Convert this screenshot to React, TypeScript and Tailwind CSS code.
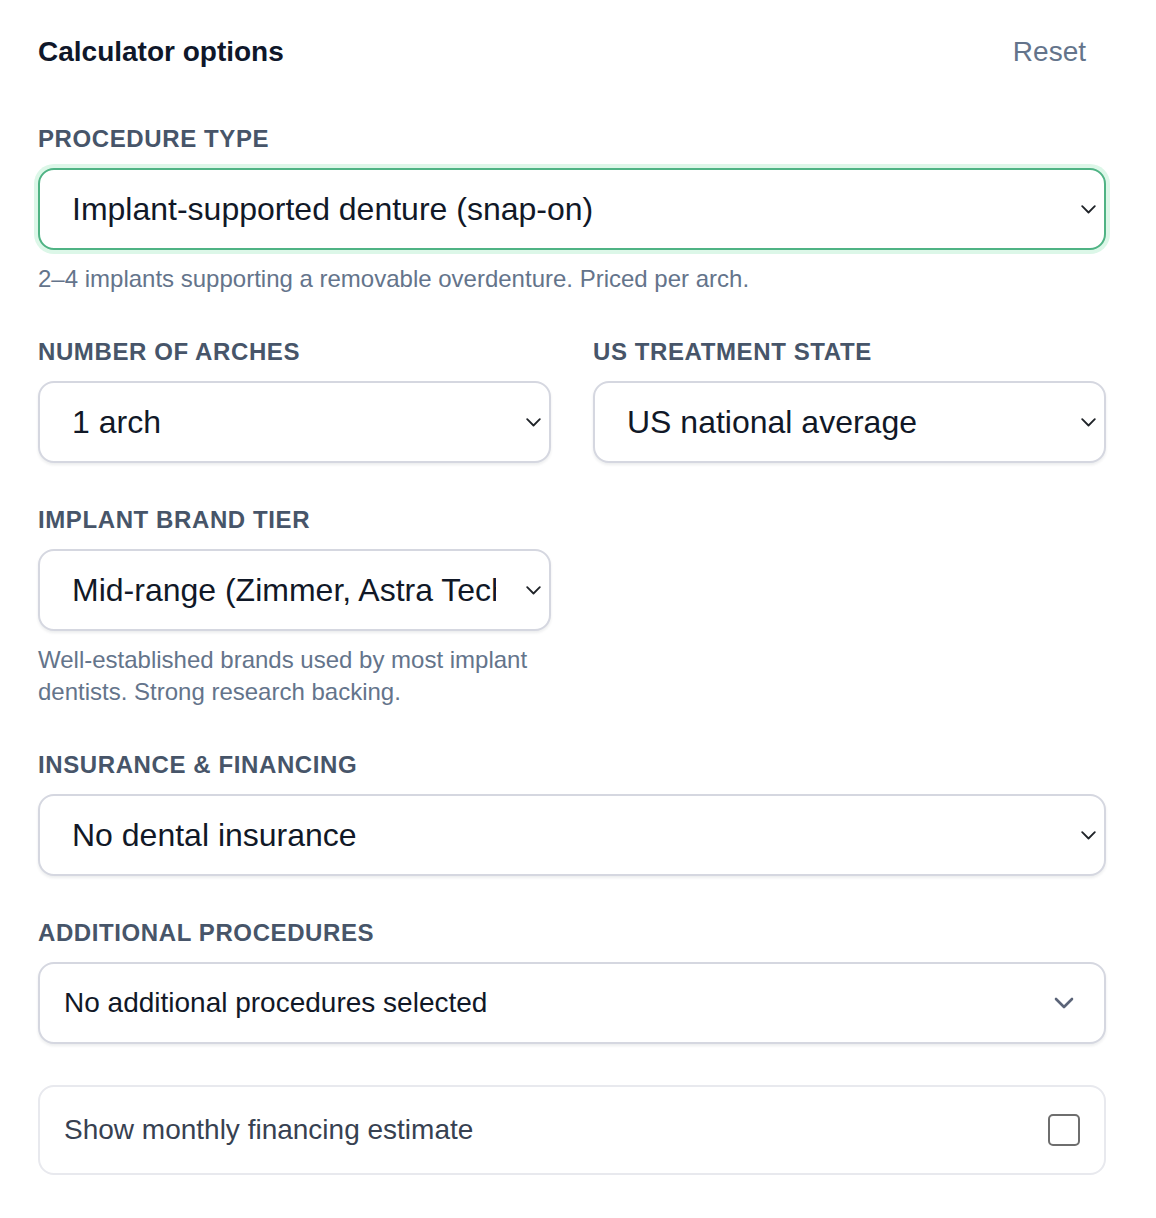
import React from "react";

const NativeChevron = () => (
  <svg width="15" height="9" viewBox="0 0 15 9" fill="none" className="shrink-0">
    <path d="M1.2 1.2 L7.5 7.5 L13.8 1.2" stroke="#1f2328" strokeWidth="1.8" strokeLinecap="round" strokeLinejoin="round" />
  </svg>
);

const Label = ({ children }: { children: React.ReactNode }) => (
  <div className="h-[32px] leading-[32px] mb-[13px] text-[24px] font-bold uppercase tracking-[0.6px] text-[#475569]">
    {children}
  </div>
);

const Hint = ({ children }: { children: React.ReactNode }) => (
  <p className="mt-[13px] text-[24px] leading-[32px] text-[#64748b]">{children}</p>
);

const FakeSelect = ({ value, focused = false }: { value: string; focused?: boolean }) => (
  <div
    className={
      focused
        ? "h-[82px] rounded-[16px] border-2 border-[#4fb384] bg-white shadow-[0_0_0_4px_#dcf7e8] flex items-center pl-[32px] pr-[8px]"
        : "h-[82px] rounded-[16px] border-2 border-[#d5d7e0] bg-white shadow-[0_2px_3px_rgba(15,23,42,0.08)] flex items-center pl-[32px] pr-[8px]"
    }
  >
    <div className="flex-1 min-w-0 overflow-hidden whitespace-nowrap text-[32px] leading-[40px] text-[#111827] mr-[30px]">
      {value}
    </div>
    <NativeChevron />
  </div>
);

export default function App() {
  return (
    <div className="w-[1156px] min-h-[1218px] bg-white font-['Liberation_Sans',Arial,sans-serif]">
      <div className="w-[1068px] ml-[38px] pt-[32px]">
        <div className="flex items-center justify-between h-[40px] mb-[51px]">
          <h2 className="text-[28px] leading-[40px] font-bold text-[#0f172a]">Calculator options</h2>
          <button className="text-[28px] leading-[40px] text-[#64748b] pr-[20px]">Reset</button>
        </div>

        <div className="flex flex-col gap-[41px]">
          <div>
            <Label>Procedure type</Label>
            <FakeSelect value="Implant-supported denture (snap-on)" focused />
            <Hint>2–4 implants supporting a removable overdenture. Priced per arch.</Hint>
          </div>

          <div className="grid grid-cols-2 gap-x-[42px] gap-y-[41px]">
            <div>
              <Label>Number of arches</Label>
              <FakeSelect value="1 arch" />
            </div>
            <div>
              <Label>US treatment state</Label>
              <FakeSelect value="US national average" />
            </div>
            <div>
              <Label>Implant brand tier</Label>
              <FakeSelect value="Mid-range (Zimmer, Astra Tech)" />
              <Hint>Well-established brands used by most implant dentists. Strong research backing.</Hint>
            </div>
          </div>

          <div>
            <Label>Insurance &amp; financing</Label>
            <FakeSelect value="No dental insurance" />
          </div>

          <div>
            <Label>Additional procedures</Label>
            <div className="h-[82px] rounded-[16px] border-2 border-[#d5d7e0] bg-white shadow-[0_2px_3px_rgba(15,23,42,0.08)] flex items-center justify-between pl-[24px] pr-[30px]">
              <span className="text-[28px] leading-[40px] text-[#111827]">No additional procedures selected</span>
              <svg width="20" height="12" viewBox="0 0 20 12" fill="none">
                <path d="M2 2 L10 10 L18 2" stroke="#5b6478" strokeWidth="2.6" strokeLinecap="round" strokeLinejoin="round" />
              </svg>
            </div>
          </div>

          <label className="h-[90px] rounded-[16px] border-2 border-[#e8e9ee] bg-white flex items-center justify-between pl-[24px] pr-[24px]">
            <span className="text-[28px] leading-[40px] text-[#374151]">Show monthly financing estimate</span>
            <span className="w-[32px] h-[32px] rounded-[5px] border-[2.5px] border-[#6e6e6e] bg-white" />
          </label>
        </div>
      </div>
    </div>
  );
}
